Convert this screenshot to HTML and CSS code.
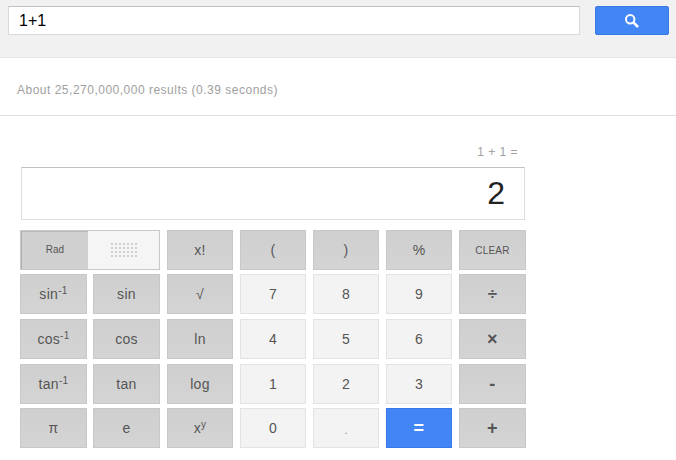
FILE: index.html
```html
<!DOCTYPE html>
<html lang="en">
<head>
<meta charset="utf-8">
<title>1+1</title>
<link rel="stylesheet" href="styles.css">
</head>
<body>
<header class="topbar">
  <div class="query">1+1</div>
  <button class="search" type="button" aria-label="Search">
    <svg width="16" height="16" viewBox="0 0 16 16" class="search-icon"><circle cx="6.2" cy="6.2" r="4.2" fill="none" stroke="#fff" stroke-width="2"/><path d="M9.4 9.4L14 14" stroke="#fff" stroke-width="2.6" fill="none"/></svg>
  </button>
</header>
<div class="stats">About 25,270,000,000 results (0.39 seconds)</div>
<main class="calc">
  <div class="expr">1 + 1 =</div>
  <div class="display">2</div>
  <div class="keys">
    <div class="toggle">
      <div class="toggle-on">Rad</div>
      <div class="toggle-off"><span class="dots"></span></div>
    </div>
    <button class="key dark" type="button">x!</button>
    <button class="key dark" type="button">(</button>
    <button class="key dark" type="button">)</button>
    <button class="key dark" type="button">%</button>
    <button class="key dark small" type="button">CLEAR</button>

    <button class="key dark" type="button">sin<sup>-1</sup></button>
    <button class="key dark" type="button">sin</button>
    <button class="key dark" type="button">√</button>
    <button class="key light" type="button">7</button>
    <button class="key light" type="button">8</button>
    <button class="key light" type="button">9</button>
    <button class="key dark divide" type="button">÷</button>

    <button class="key dark" type="button">cos<sup>-1</sup></button>
    <button class="key dark" type="button">cos</button>
    <button class="key dark" type="button">ln</button>
    <button class="key light" type="button">4</button>
    <button class="key light" type="button">5</button>
    <button class="key light" type="button">6</button>
    <button class="key dark bold" type="button">×</button>

    <button class="key dark" type="button">tan<sup>-1</sup></button>
    <button class="key dark" type="button">tan</button>
    <button class="key dark" type="button">log</button>
    <button class="key light" type="button">1</button>
    <button class="key light" type="button">2</button>
    <button class="key light" type="button">3</button>
    <button class="key dark bold" type="button">-</button>

    <button class="key dark" type="button">π</button>
    <button class="key dark" type="button">e</button>
    <button class="key dark" type="button">x<sup>y</sup></button>
    <button class="key light" type="button">0</button>
    <button class="key light dot-key" type="button">.</button>
    <button class="key blue" type="button">=</button>
    <button class="key dark bold" type="button">+</button>
  </div>
</main>
</body>
</html>
```
FILE: styles.css
```css
* { box-sizing: border-box; }
html, body { margin: 0; padding: 0; }
body {
  width: 676px;
  height: 460px;
  overflow: hidden;
  background: #fff;
  font-family: "Liberation Sans", Arial, sans-serif;
  color: #444;
}
.topbar {
  display: flex;
  height: 58px;
  padding: 6px 7px 0 8px;
  gap: 15px;
  background: #f1f1f1;
  border-bottom: 1px solid #e5e5e5;
}
.query {
  width: 572px;
  height: 29px;
  padding: 0 0 0 10px;
  background: #fff;
  border: 1px solid #d9d9d9;
  border-top-color: #c0c0c0;
  font-size: 16px;
  line-height: 27px;
  color: #000;
}
.search {
  display: flex;
  align-items: center;
  justify-content: center;
  width: 74px;
  height: 29px;
  padding: 0;
  background: #4285f4;
  border: 1px solid #3b78e7;
  border-radius: 2px;
}
.stats {
  height: 58px;
  padding: 24px 0 0 17px;
  border-bottom: 1px solid #e0e0e0;
  font-size: 12px;
  line-height: 16px;
  letter-spacing: 0.5px;
  color: #a0a0a0;
}
.calc {
  padding: 28px 0 0 20px;
}
.expr {
  width: 498px;
  height: 16px;
  margin-bottom: 7px;
  text-align: right;
  font-size: 12px;
  line-height: 16px;
  letter-spacing: 0.5px;
  color: #a0a0a0;
}
.display {
  width: 504px;
  height: 53px;
  margin: 0 0 10px 1px;
  padding-right: 19px;
  background: #fff;
  border: 1px solid #dedede;
  border-top-color: #c0c0c0;
  text-align: right;
  font-size: 32px;
  line-height: 51px;
  color: #222;
}
.keys {
  display: grid;
  grid-template-columns: 66px 67px 66px 66px 66px 66px 67px;
  grid-template-rows: 40px 41px 41px 40px 40px;
  column-gap: 7px;
  row-gap: 4px;
  justify-items: start;
  align-items: start;
}
.key {
  width: 66px;
  height: 40px;
  padding: 0;
  font-family: "Liberation Sans", Arial, sans-serif;
  font-size: 14px;
  letter-spacing: 0.3px;
  color: #555;
  border: 1px solid;
  border-radius: 0;
}
.key:nth-child(7n),
.key:nth-child(7n+1),
.key:nth-child(7n+6) { width: 67px; }
.key sup {
  font-size: 10px;
  line-height: 0;
  vertical-align: 5px;
}
.dark {
  background: linear-gradient(#cfcfcf, #d4d4d4);
  border-color: #c8c8c8;
}
.light {
  background: #f3f3f3;
  border-color: #e3e3e3;
}
.blue {
  background: #4285f4;
  border-color: #3b78e7;
  color: #fff;
  font-size: 18px;
  font-weight: bold;
}
.small { font-size: 10px; letter-spacing: 0.2px; }
.bold { font-size: 18px; font-weight: bold; color: #555; }
.divide { font-size: 17px; font-weight: bold; }
.dot-key { color: #999; font-size: 12px; padding-top: 3px; }
.toggle {
  grid-column: span 2;
  display: flex;
  width: 140px;
  height: 40px;
  border: 1px solid #c8c8c8;
  background: #f5f5f5;
}
.toggle-on {
  width: 67px;
  background: #d0d0d0;
  border-left: 1px solid #b0b0b0;
  border-top: 1px solid #b8b8b8;
  font-size: 10px;
  line-height: 36px;
  text-align: center;
  color: #555;
}
.toggle-off {
  flex: 1;
  display: flex;
  align-items: center;
  justify-content: center;
}
.dots {
  display: block;
  width: 28px;
  height: 16px;
  background-image: radial-gradient(circle, #cfcfcf 1px, transparent 1.2px);
  background-size: 4px 4px;
}
```
